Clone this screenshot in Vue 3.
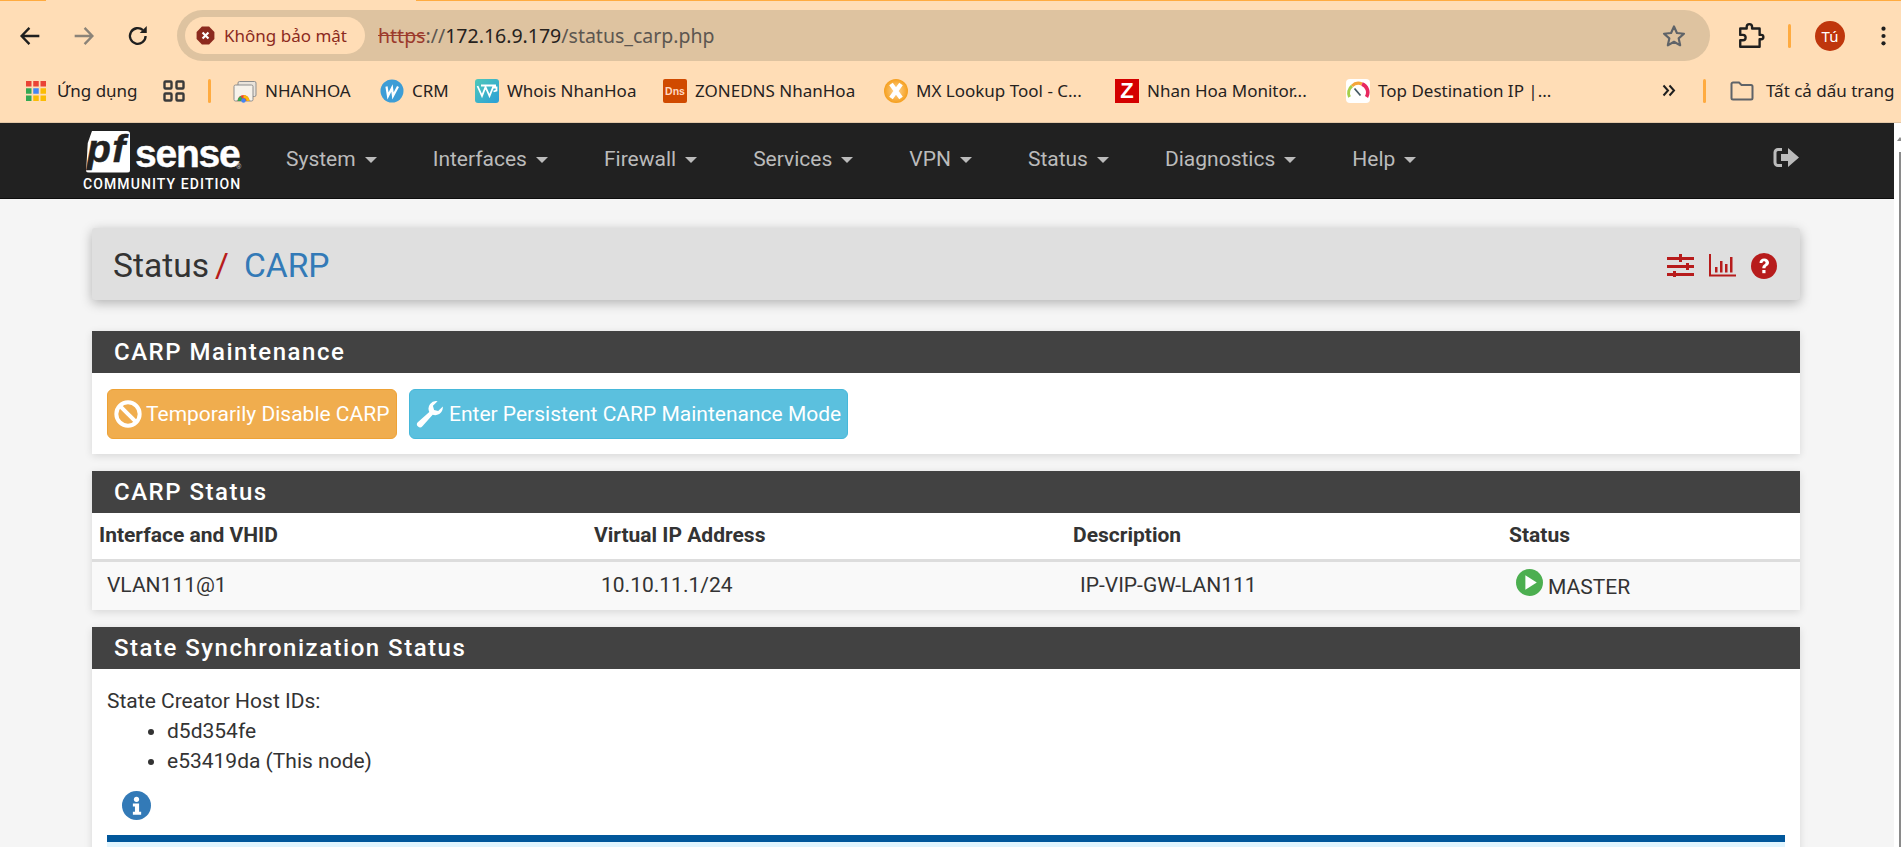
<template>
  <div class="page">
    <header class="browser">
      <div class="tabline"><span class="gap"></span></div>
      <div class="toolbar">
        <div class="navbtns">
          <svg class="tb" viewBox="0 0 24 24"><path d="M20 12H5M11.500 5L4.800 12l6.700 7" fill="none" stroke="#1f1f1f" stroke-width="2"/></svg>
          <svg class="tb" viewBox="0 0 24 24"><path d="M4 12h15M12.500 5l6.700 7-6.700 7" fill="none" stroke="#8b8378" stroke-width="2"/></svg>
          <svg class="tb" viewBox="0 0 24 24"><path d="M18.500 12a6.700 6.700 0 1 1-2.200-5" fill="none" stroke="#1f1f1f" stroke-width="2"/><path d="M19.500 3.500v6h-6z" fill="#1f1f1f"/></svg>
        </div>
        <div class="omnibox">
          <div class="chip">
            <svg class="warn" viewBox="0 0 16 16"><path d="M5 .5h6L15.500 5v6L11 15.500H5L.5 11V5z" fill="#8c2a1e"/><path d="M5.500 5.500l5 5M10.500 5.500l-5 5" stroke="#fff" stroke-width="1.800"/></svg>
            <span>Không bảo mật</span>
          </div>
          <div class="url"><span class="https">https</span><span class="dim">://</span>172.16.9.179<span class="dim">/status_carp.php</span></div>
          <svg class="star" viewBox="0 0 24 24"><path d="M12 3.200l2.700 6 6.500.7-4.900 4.300 1.400 6.400L12 17.300l-5.700 3.300 1.400-6.400-4.900-4.300 6.500-.7z" fill="none" stroke="#5f6368" stroke-width="2" stroke-linejoin="round"/></svg>
        </div>
        <div class="tools">
          <svg class="puzzle" viewBox="0 0 26 26"><path d="M3 6h6V4.500a2.500 2.500 0 0 1 5 0V6h7v6h1.500a2 2 0 0 1 0 4H21v7H3v-6h2.500a2.500 2.500 0 0 0 0-5H3z" fill="none" stroke="#1f1f1f" stroke-width="2.200" stroke-linejoin="round"/></svg>
          <i class="vsep"></i>
          <span class="avatar">Tú</span>
          <svg class="kebab" viewBox="0 0 6 24"><circle cx="3" cy="4" r="2.300" fill="#1f1f1f"/><circle cx="3" cy="12" r="2.300" fill="#1f1f1f"/><circle cx="3" cy="20" r="2.300" fill="#1f1f1f"/></svg>
        </div>
      </div>
      <div class="bookmarks">
        <div class="bm apps">
          <svg class="appsico" viewBox="0 0 20 20">
            <rect x="0" y="0" width="5.500" height="5.500" fill="#ea4335"/><rect x="7.250" y="0" width="5.500" height="5.500" fill="#ea4335"/><rect x="14.500" y="0" width="5.500" height="5.500" fill="#ea4335"/>
            <rect x="0" y="7.250" width="5.500" height="5.500" fill="#34a853"/><rect x="7.250" y="7.250" width="5.500" height="5.500" fill="#4285f4"/><rect x="14.500" y="7.250" width="5.500" height="5.500" fill="#fbbc05"/>
            <rect x="0" y="14.500" width="5.500" height="5.500" fill="#34a853"/><rect x="7.250" y="14.500" width="5.500" height="5.500" fill="#fbbc05"/><rect x="14.500" y="14.500" width="5.500" height="5.500" fill="#fbbc05"/>
          </svg>
          <span>Ứng dụng</span>
        </div>
        <svg class="grid4" viewBox="0 0 22 22"><rect x="1.500" y="1.500" width="7" height="7" rx="1" fill="none" stroke="#3a3a3a" stroke-width="2.400"/><rect x="13.500" y="1.500" width="7" height="7" rx="1" fill="none" stroke="#3a3a3a" stroke-width="2.400"/><rect x="1.500" y="13.500" width="7" height="7" rx="1" fill="none" stroke="#3a3a3a" stroke-width="2.400"/><rect x="13.500" y="13.500" width="7" height="7" rx="1" fill="none" stroke="#3a3a3a" stroke-width="2.400"/></svg>
        <i class="vsep"></i>
        <div class="bm nh">
          <svg class="fav" viewBox="0 0 24 24"><rect x="5" y="2.500" width="18" height="15" rx="1.500" fill="#e9e3db" stroke="#8d8d8d"/><rect x="1" y="6" width="19" height="16" rx="1.500" fill="#f7f2ea" stroke="#8d8d8d"/><path d="M4.500 22a6 6 0 0 1 12 0z" fill="#ea4335"/><path d="M10.500 16a6 6 0 0 1 6 6h-3a3 3 0 0 0-3-3z" fill="#fbbc05"/><path d="M4.500 22a6 6 0 0 1 3-5l2 3a3 3 0 0 0-1.500 2z" fill="#34a853"/><circle cx="10.500" cy="21.500" r="2.200" fill="#4285f4"/></svg>
          <span>NHANHOA</span>
        </div>
        <div class="bm crm">
          <svg class="fav" viewBox="0 0 24 24"><circle cx="12" cy="12" r="11.500" fill="#3d9dd6"/><path d="M6.500 7.500l1.500 9.500 4-8 1 8 5-9.500" fill="none" stroke="#fff" stroke-width="2.200"/></svg>
          <span>CRM</span>
        </div>
        <div class="bm whois">
          <svg class="fav" viewBox="0 0 24 24"><defs><linearGradient id="whoisgrad" x1="0" y1="0" x2="1" y2="1"><stop offset="0" stop-color="#4fc8b8"/><stop offset="1" stop-color="#2b9fd8"/></linearGradient></defs><rect width="24" height="24" rx="3" fill="url(#whoisgrad)"/><path d="M2.500 7l4.500 10 3.500-9 4 9L18 8.500h3.500v3l-3 1M6 6.500h15" fill="none" stroke="#fff" stroke-width="1.800"/></svg>
          <span>Whois NhanHoa</span>
        </div>
        <div class="bm dns">
          <span class="dnsico">Dns</span>
          <span>ZONEDNS NhanHoa</span>
        </div>
        <div class="bm mx">
          <svg class="fav" viewBox="0 0 24 24"><defs><radialGradient id="mxgrad"><stop offset="0" stop-color="#ffd79a"/><stop offset="1" stop-color="#f59f1e"/></radialGradient></defs><circle cx="12" cy="12" r="12" fill="url(#mxgrad)"/><path d="M7 5l10 14M17 5L7 19" stroke="#fff" stroke-width="4.400"/></svg>
          <span>MX Lookup Tool - C...</span>
        </div>
        <div class="bm zab">
          <span class="zico">Z</span>
          <span>Nhan Hoa Monitor...</span>
        </div>
        <div class="bm top">
          <svg class="fav" viewBox="0 0 24 24"><rect width="24" height="24" rx="4" fill="#fff"/><path d="M3.500 18A9 9 0 0 1 6 7" fill="none" stroke="#a5cf4a" stroke-width="3"/><path d="M6 7a9 9 0 0 1 10-2" fill="none" stroke="#f4a63a" stroke-width="3"/><path d="M16 5a9 9 0 0 1 4.500 13" fill="none" stroke="#e8285f" stroke-width="3.600"/><path d="M8.500 9.500l6 7" stroke="#455a64" stroke-width="1.800"/></svg>
          <span>Top Destination IP |...</span>
        </div>
        <svg class="chev" viewBox="0 0 14 12"><path d="M1.500 1l4.500 5-4.500 5M7.500 1l4.500 5-4.500 5" fill="none" stroke="#1f1f1f" stroke-width="2"/></svg>
        <i class="vsep"></i>
        <div class="bm all">
          <svg class="folder" viewBox="0 0 24 20"><path d="M1.500 17V3a1.500 1.500 0 0 1 1.500-1.500h6l2.500 2.500H21a1.500 1.500 0 0 1 1.500 1.500V17a1.500 1.500 0 0 1-1.500 1.500H3A1.500 1.500 0 0 1 1.500 17z" fill="none" stroke="#5f6368" stroke-width="2"/></svg>
          <span>Tất cả dấu trang</span>
        </div>
      </div>
    </header>

    <div class="viewport">
      <div class="site">
        <nav class="topnav">
          <div class="logo">
            <div class="logo-top">
              <span class="pf">pf</span><span class="sense">sense</span><span class="reg">®</span>
            </div>
            <div class="edition">COMMUNITY EDITION</div>
          </div>
          <ul class="menu">
            <li v-for="item in menu" :key="item">{{ item }}<i class="caret"></i></li>
          </ul>
          <svg class="logout" viewBox="0 0 27 21"><path d="M9 2.500H5a3 3 0 0 0-3 3v10a3 3 0 0 0 3 3h4" fill="none" stroke="#bbb" stroke-width="3"/><path d="M8 7h7V1l11 9.500L15 20v-6H8z" fill="#bbb"/></svg>
        </nav>

        <main class="content">
          <div class="crumbs">
            <h1><span>Status</span><em>/</em><a>CARP</a></h1>
            <div class="crumb-icons">
              <svg class="ci" viewBox="0 0 27 23"><path d="M0 3h27v3H0zM0 11h27v3H0zM0 19h27v3H0z" fill="#b71c1c"/><path d="M12 0h3v8h-3zM19 9h3v7h-3zM6 17h3v6H6z" fill="#b71c1c"/></svg>
              <svg class="ci" viewBox="0 0 27 23"><path d="M1 0v21.500h26" fill="none" stroke="#b71c1c" stroke-width="2"/><path d="M6 13h2.500v5.500H6zM11 7h2.500v11.500H11zM16 10h2.500v8.500H16zM21 3h2.500v15.500H21z" fill="#b71c1c"/></svg>
              <svg class="help" viewBox="0 0 26 26"><circle cx="13" cy="13" r="13" fill="#b71c1c"/><path d="M8.500 10c0-3 2-4.500 4.700-4.500 2.800 0 4.800 1.700 4.800 4 0 3.600-3.500 3.300-3.500 5.700h-3.200c0-4 3.300-3.800 3.300-5.500 0-.8-.7-1.400-1.500-1.400-1 0-1.500.6-1.700 1.800z" fill="#fff"/><rect x="11.300" y="17" width="3.200" height="3.200" fill="#fff"/></svg>
            </div>
          </div>

          <section class="panel">
            <h2>CARP Maintenance</h2>
            <div class="maint">
              <button class="btn warning">
                <svg class="bi" viewBox="0 0 24 24"><circle cx="12" cy="12" r="10" fill="none" stroke="#fff" stroke-width="3.400"/><path d="M5 5l14 14" stroke="#fff" stroke-width="3.400"/></svg>
                Temporarily Disable CARP
              </button>
              <button class="btn info">
                <svg class="bi" viewBox="0 0 24 24"><path d="M23 6.500a6.500 6.500 0 0 1-8.700 6.100L5.500 22.500a2.600 2.600 0 0 1-4-3.500l9.900-8.800A6.500 6.500 0 0 1 18.500 1l-4 4 1 3.500 3.500 1 4-4z" fill="#fff"/></svg>
                Enter Persistent CARP Maintenance Mode
              </button>
            </div>
          </section>

          <section class="panel">
            <h2>CARP Status</h2>
            <table class="carp">
              <thead>
                <tr><th class="c1">Interface and VHID</th><th class="c2">Virtual IP Address</th><th class="c3">Description</th><th>Status</th></tr>
              </thead>
              <tbody>
                <tr>
                  <td>VLAN111@1</td>
                  <td class="mid">10.10.11.1/24</td>
                  <td class="mid">IP-VIP-GW-LAN111</td>
                  <td class="state">
                    <svg class="play" viewBox="0 0 26 26"><circle cx="13" cy="13" r="13" fill="#4caf50"/><path d="M9 6l11 7-11 7z" fill="#fff"/></svg>
                    <span>MASTER</span>
                  </td>
                </tr>
              </tbody>
            </table>
          </section>

          <section class="panel">
            <h2>State Synchronization Status</h2>
            <div class="sync">
              <div>State Creator Host IDs:</div>
              <ul>
                <li>d5d354fe</li>
                <li>e53419da (This node)</li>
              </ul>
              <svg class="infoi" viewBox="0 0 28 28"><circle cx="14" cy="14" r="14" fill="#337ab7"/><circle cx="14" cy="8" r="2.500" fill="#fff"/><path d="M10.500 12h6v8h2v3h-8v-3h2v-5h-2z" fill="#fff"/></svg>
              <div class="note"><div class="note-body"></div></div>
            </div>
          </section>
        </main>
      </div>
      <div class="scrollbar"><i class="arrow"></i><i class="thumb"></i></div>
    </div>
  </div>
</template>

<script setup>
const menu = ['System', 'Interfaces', 'Firewall', 'Services', 'VPN', 'Status', 'Diagnostics', 'Help']
</script>

<style>
html, body { margin: 0; overflow: hidden; }
</style>

<style scoped>
.page {
  width: 1901px;
  height: 847px;
  display: flex;
  flex-direction: column;
  overflow: hidden;
  font-family: Roboto, sans-serif;
}

.browser {
  height: 123px;
  flex: none;
  background: #ffddb6;
  border-bottom: 1px solid #e3c7a6;
  box-sizing: border-box;
  font-family: "Noto Sans", sans-serif;
  color: #26221e;
}
.tabline { height: 1px; background: #ffab40; }
.tabline .gap { display: block; width: 370px; height: 1px; margin-left: 46px; background: #ffddb6; }

.toolbar { height: 60px; display: flex; align-items: center; padding-top: 9px; box-sizing: border-box; padding-left: 16px; }
.navbtns { display: flex; gap: 26px; width: 161px; flex: none; }
.tb { width: 28px; height: 28px; }
.omnibox {
  width: 1533px;
  height: 51px;
  border-radius: 26px;
  background: #dec3a0;
  display: flex;
  align-items: center;
  padding: 0 0 0 8px;
  box-sizing: border-box;
  flex: none;
}
.chip {
  height: 37px;
  border-radius: 19px;
  background: #ffddb6;
  display: flex;
  align-items: center;
  gap: 9px;
  padding: 0 0 0 11px;
  box-sizing: border-box;
  width: 180px;
  color: #8c2a1e;
  font-size: 17px;
  flex: none;
  white-space: nowrap;
}
.warn { width: 19px; height: 19px; flex: none; }
.url { margin-left: 13px; font-size: 19.500px; color: #26221e; flex: 1; white-space: nowrap; }
.https { color: #9c3a2c; text-decoration: line-through; }
.dim { color: #5c5650; }
.star { width: 26px; height: 26px; margin-right: 23px; }

.tools { display: flex; align-items: center; flex: none; margin-left: 27px; }
.puzzle { width: 28px; height: 28px; }
.tools .vsep { margin: 0 24px 0 23px; height: 24px; }
.avatar {
  width: 30px;
  height: 30px;
  border-radius: 50%;
  background: #bf360c;
  color: #fff;
  font-size: 15px;
  text-align: center;
  line-height: 30px;
}
.kebab { width: 7px; height: 22px; margin-left: 35px; }

.vsep { display: block; width: 3px; height: 24px; background: #ffab40; border-radius: 2px; flex: none; }

.bookmarks { height: 61px; display: flex; align-items: center; padding: 0 0 2px 26px; white-space: nowrap; font-size: 17px; box-sizing: border-box; }
.bm { display: flex; align-items: center; gap: 8px; flex: none; }
.fav { width: 24px; height: 24px; flex: none; }
.appsico { width: 20px; height: 20px; flex: none; }
.apps { width: 137px; gap: 11px; }
.grid4 { width: 22px; height: 22px; flex: none; }
.grid4 + .vsep { margin-left: 23px; }
.nh { margin-left: 22px; width: 147px; }
.crm { width: 95px; }
.whois { width: 188px; }
.dns { width: 221px; }
.mx { width: 231px; }
.zab { width: 231px; }
.top { width: 316px; }
.dnsico {
  width: 24px; height: 24px; border-radius: 2px; background: #d04a00; color: #ffd9c2;
  font: bold 10.500px/24px "Liberation Sans", sans-serif; text-align: center; flex: none;
}
.zico {
  width: 24px; height: 24px; background: #d40000; color: #fff;
  font: bold 22px/24px "Liberation Sans", sans-serif; text-align: center; flex: none;
}
.chev { width: 14px; height: 13px; flex: none; }
.chev + .vsep { margin-left: 27px; }
.all { margin-left: 24px; gap: 12px; }
.folder { width: 24px; height: 20px; }

.viewport { flex: 1; display: flex; min-height: 0; background: #f5f5f5; }
.site { width: 1894px; flex: none; }
.scrollbar { flex: 1; background: #fff; position: relative; }
.scrollbar .arrow {
  position: absolute; left: 3px; top: 14px;
  border-left: 3px solid transparent; border-right: 3px solid transparent; border-bottom: 4px solid #8a8a8a;
}
.scrollbar .thumb {
  position: absolute; left: 5px; top: 29px; bottom: 0; width: 2px; background: #8a8a8a;
}

.topnav {
  height: 76px;
  background: #212121;
  border-bottom: 1px solid #0d0d0d;
  box-sizing: border-box;
  display: flex;
  align-items: center;
  padding-left: 83px;
}
.logo { width: 160px; flex: none; color: #fff; }
.logo-top { display: flex; align-items: flex-end; height: 42px; position: relative; }
.pf {
  display: block;
  width: 44px;
  height: 42px;
  margin-left: 3px;
  background: #fff;
  border-radius: 3px;
  color: #212121;
  font: italic bold 39px/36px "Liberation Sans", sans-serif;
  letter-spacing: 1.500px;
  text-indent: 1px;
  -webkit-text-stroke: .5px #212121;
  clip-path: polygon(14% 0, 100% 0, 100% 100%, 0 100%, 4% 30%);
}
.sense {
  font: bold 39px/36px "Liberation Sans", sans-serif;
  letter-spacing: -1.200px;
  -webkit-text-stroke: .4px #fff;
  margin-left: 5px;
  margin-bottom: 1px;
}
.reg { font-size: 7px; line-height: 8px; position: absolute; left: 153px; top: 32px; color: #bbb; }
.edition { font: 500 14px/14px Roboto, sans-serif; letter-spacing: 1.100px; margin-top: 4px; white-space: nowrap; }

.menu { list-style: none; display: flex; margin: -3px 0 0; padding: 0 0 0 43px; color: #bbb; font-size: 21px; flex: 1; }
.menu li { display: flex; align-items: center; margin-right: 56px; }
.caret { display: block; width: 0; height: 0; margin-left: 9px; border-left: 6px solid transparent; border-right: 6px solid transparent; border-top: 6px solid #bbb; margin-top: 2px; }
.logout { width: 27px; height: 21px; margin-right: 94px; margin-top: -6px; }

.content { padding: 29px 0 0 92px; width: 1708px; box-sizing: content-box; color: #333; font-size: 21px; }

.crumbs {
  height: 72px;
  background: #dfdfdf;
  border-radius: 3px;
  box-shadow: 0 3px 12px rgba(0, 0, 0, .28);
  box-sizing: border-box;
  display: flex;
  align-items: center;
  justify-content: space-between;
  padding: 3px 23px 0 21px;
  margin-bottom: 31px;
}
.crumbs h1 { margin: 0; font-size: 33.600px; font-weight: 400; color: #333; }
.crumbs em { font-style: normal; color: #b71c1c; margin: 0 15px 0 6px; }
.crumbs a { color: #337ab7; }
.crumb-icons { display: flex; align-items: center; }
.ci { width: 27px; height: 23px; margin-right: 15px; }
.help { width: 26px; height: 26px; }

.panel { background: #fff; box-shadow: 0 2px 8px rgba(0, 0, 0, .12); margin-bottom: 17px; }
.panel h2 {
  margin: 0;
  height: 42px;
  background: #424242;
  color: #fff;
  font-size: 24px;
  font-weight: 500;
  letter-spacing: 1.500px;
  line-height: 43px;
  padding-left: 22px;
}

.maint { height: 81px; display: flex; gap: 12px; padding: 16px 15px 0; box-sizing: border-box; }
.btn {
  height: 50px;
  border-radius: 6px;
  color: #fff;
  font: 400 21px Roboto, sans-serif;
  display: flex;
  align-items: center;
  gap: 5px;
  padding: 0 4px 0 6px;
  white-space: nowrap;
}
.warning { background: #f0ad4e; border: 1px solid #eea236; width: 290px; gap: 4px; }
.info { background: #5bc0de; border: 1px solid #46b8da; width: 439px; }
.bi { width: 28px; height: 28px; flex: none; }

.carp { width: 100%; border-collapse: collapse; }
.carp th { text-align: left; font-weight: 700; height: 47px; padding: 0 0 2px 7px; border-bottom: 3px solid #ddd; box-sizing: border-box; }
.carp td { height: 50px; padding: 0 0 2px 15px; background: #f9f9f9; box-sizing: border-box; }
.carp .mid { padding-left: 14px; }
.c1 { width: 495px; }
.c2 { width: 479px; }
.c3 { width: 436px; }
.state .play { width: 27px; height: 27px; vertical-align: 0; margin-right: 5px; }
.state span { vertical-align: 2px; }
.carp .state { padding-left: 14px; }

.sync { padding: 17px 15px 0; line-height: 30px; height: 300px; box-sizing: border-box; }
.sync ul { margin: 0; padding-left: 60px; }
.infoi { display: block; width: 29px; height: 29px; margin: 15px 0 0 15px; }
.note { margin-top: 15px; border-top: 7px solid #01579b; background: #e1f5fe; height: 100px; }
</style>
